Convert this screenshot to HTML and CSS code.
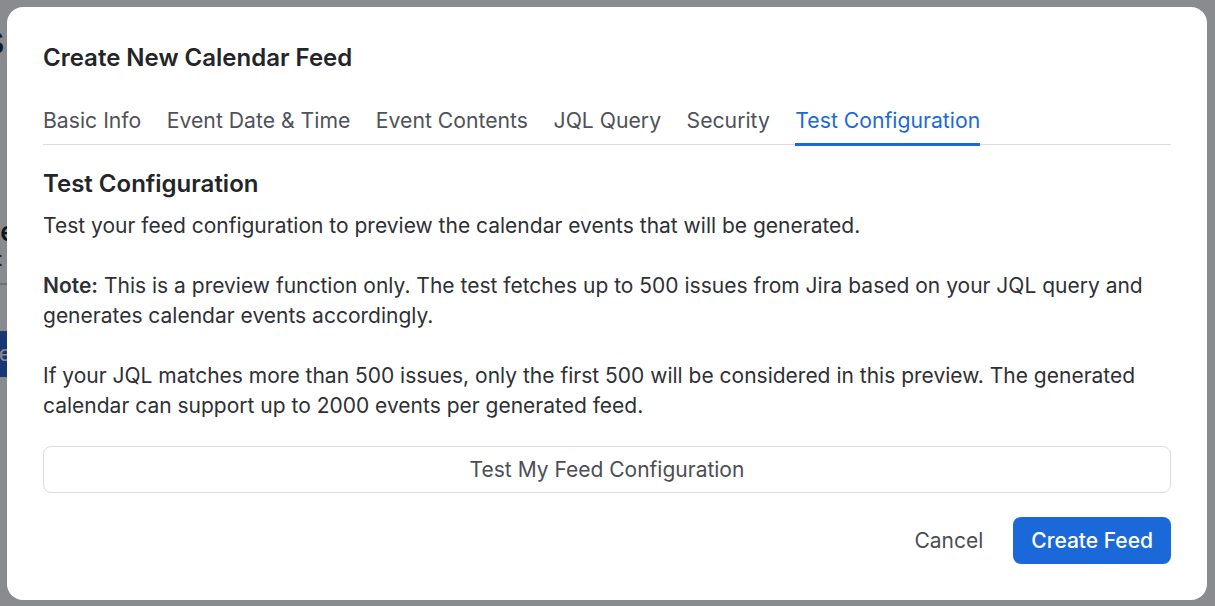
FILE: index.html
```html
<!DOCTYPE html>
<html lang="en">
<head>
    <meta charset="UTF-8">
    <meta name="viewport" content="width=device-width, initial-scale=1.0">
    <title>Calendar Feeds</title>
    <link rel="stylesheet" href="styles.css">
</head>
<body>
    <div class="page">
        <h1 class="page-title">Calendar Feeds</h1>
        <a class="page-link" href="#">Learn more</a>
        <div class="page-row">
            <div class="page-name">Release schedule</div>
            <div class="page-sub">Last synced</div>
        </div>
        <button class="page-btn">New feed</button>
    </div>
    <div class="overlay">
        <div class="modal">
            <h2 class="modal-title">Create New Calendar Feed</h2>
            <nav class="tabs">
                <span class="tab">Basic Info</span>
                <span class="tab">Event Date &amp; Time</span>
                <span class="tab">Event Contents</span>
                <span class="tab">JQL Query</span>
                <span class="tab">Security</span>
                <span class="tab active">Test Configuration</span>
            </nav>
            <section class="panel">
                <h3>Test Configuration</h3>
                <p>Test your feed configuration to preview the calendar events that will be generated.</p>
                <p><strong>Note:</strong> This is a preview function only. The test fetches up to 500 issues from Jira based on your JQL query and generates calendar events accordingly.</p>
                <p>If your JQL matches more than 500 issues, only the first 500 will be considered in this preview. The generated calendar can support up to 2000 events per generated feed.</p>
                <button class="test-btn">Test My Feed Configuration</button>
            </section>
            <div class="modal-footer">
                <button class="btn-cancel">Cancel</button>
                <button class="btn-primary">Create Feed</button>
            </div>
        </div>
    </div>
</body>
</html>
```
FILE: styles.css
```css
body {
    margin: 0;
    overflow: hidden;
    height: 100vh;
    background: #fff;
    font-family: Inter, "Noto Sans", sans-serif;
}
.page {
    margin-left: -330px;
    padding-top: 12px;
    width: 400px;
}
.page-title {
    margin: 0 0 110px;
    font-size: 44px;
    color: #0f1e3d;
}
.page-link {
    display: block;
    color: #1a4fb0;
    font-size: 22px;
    text-decoration: none;
}
.page-row {
    margin-top: 14px;
    padding-bottom: 12px;
    border-bottom: 2px solid #c5c8ce;
}
.page-name {
    font-size: 26px;
    font-weight: 600;
    color: #111;
    text-align: right;
}
.page-sub {
    font-size: 20px;
    font-weight: 600;
    color: #333;
    text-align: right;
    margin-right: -8px;
}
.page-btn {
    display: block;
    margin: 46px -20px 0 auto;
    height: 46px;
    padding: 0 14px;
    border: none;
    background: #1f57c8;
    color: #fff;
    font-size: 22px;
}
.overlay {
    position: fixed;
    inset: 0;
    background: rgba(20, 24, 32, 0.5);
    padding: 7px 8px 6px 7px;
}
.modal {
    background: #fff;
    border-radius: 16px;
    height: 100%;
    box-sizing: border-box;
    padding: 36px;
    display: flex;
    flex-direction: column;
    color: #2a2c31;
}
.modal-title {
    margin: 0;
    font-size: 24px;
    font-weight: 600;
    color: #232529;
    line-height: 30px;
}
.tabs {
    display: flex;
    gap: 25.5px;
    margin-top: 34px;
    border-bottom: 1px solid #dcdde0;
}
.tab {
    font-size: 21.2px;
    color: #4e5259;
    padding-bottom: 10px;
    border-bottom: 3px solid transparent;
    margin-bottom: -2px;
    line-height: 26px;
}
.tab.active {
    color: #1b69d9;
    border-bottom-color: #1b69d9;
}
.panel h3 {
    margin: 24px 0 12px;
    font-size: 24px;
    font-weight: 600;
    color: #232529;
    line-height: 30px;
}
.panel p {
    margin: 0 0 30px;
    font-size: 21px;
    line-height: 30px;
    color: #2e3035;
}
.panel strong {
    font-weight: 600;
}
.test-btn {
    display: block;
    width: 100%;
    height: 47px;
    margin-top: -5px;
    background: #fff;
    border: 1px solid #dcdde0;
    border-radius: 8px;
    font-family: inherit;
    font-size: 21px;
    color: #4b4e55;
}
.modal-footer {
    margin-top: auto;
    display: flex;
    justify-content: flex-end;
    align-items: center;
    gap: 30px;
}
.btn-cancel {
    background: none;
    border: none;
    font-family: inherit;
    font-size: 21px;
    color: #4b4e55;
    padding: 0;
}
.btn-primary {
    height: 47px;
    padding: 0 18px;
    border: none;
    border-radius: 8px;
    background: #1b69d9;
    color: #fff;
    font-family: inherit;
    font-size: 21px;
    font-weight: 500;
}
```
